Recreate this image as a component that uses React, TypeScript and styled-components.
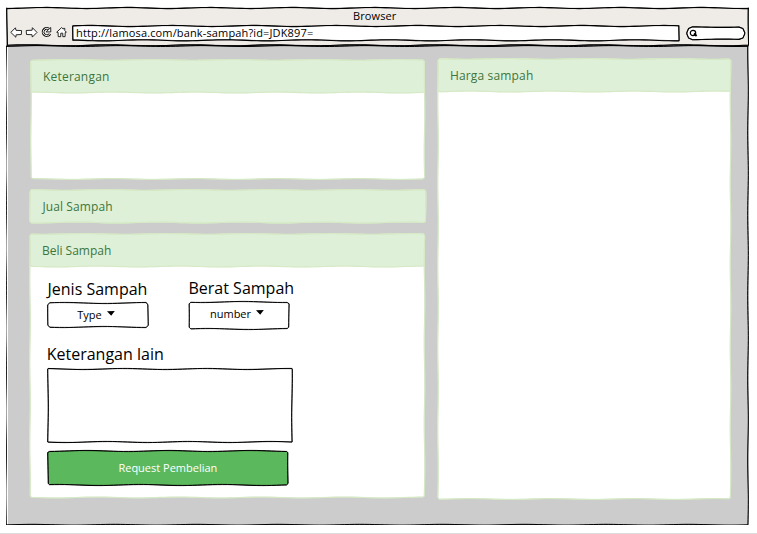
import React from "react";
import styled, { createGlobalStyle } from "styled-components";

const GlobalStyle = createGlobalStyle`
  * { box-sizing: border-box; }
  html, body { margin: 0; padding: 0; background: #fff; }
  body { font-family: "Open Sans", "Noto Sans", sans-serif; color: #000; overflow: hidden; }
`;

/* Builds a slightly wavy outline of a rectangle, as if drawn by hand. */
function wavyRect(w: number, h: number, r: number, amp: number, wave: number, seed: number) {
  const off = (d: number, k: number) =>
    amp * Math.sin((d / wave) * Math.PI * 2 + seed * 1.7 + k * 2.1);
  const pts: string[] = [];
  const side = (len: number, k: number, place: (d: number, o: number) => [number, number]) => {
    const span = len - 2 * r;
    const n = Math.max(3, Math.ceil(span / 5));
    for (let i = 0; i <= n; i++) {
      const d = r + (span * i) / n;
      const [x, y] = place(d, off(d, k));
      pts.push(`${x.toFixed(2)} ${y.toFixed(2)}`);
    }
  };
  const corner = (x: number, y: number) => {
    if (r > 4) pts.push(`${x.toFixed(2)} ${y.toFixed(2)}`);
  };
  const c = r * 0.29;
  side(w, 0, (d, o) => [d, o]);
  corner(w - c, c);
  side(h, 1, (d, o) => [w + o * 0.6, d]);
  corner(w - c, h - c);
  side(w, 2, (d, o) => [w - d, h + o]);
  corner(c, h - c);
  side(h, 3, (d, o) => [o * 0.6, h - d]);
  corner(c, c);
  return `M${pts.join("L")}Z`;
}

const Drawing = styled.svg`
  position: absolute;
  left: 0;
  top: 0;
  overflow: visible;
  pointer-events: none;
`;

interface OutlineProps {
  w: number;
  h: number;
  r?: number;
  color?: string;
  fill?: string;
  seed?: number;
  amp?: number;
  wave?: number;
  weight?: number;
}

function Outline({ w, h, r = 0, color = "#000", fill = "none", seed = 0, amp = 0.6, wave = 82, weight = 1.1 }: OutlineProps) {
  return (
    <Drawing width={w} height={h} aria-hidden="true">
      <path d={wavyRect(w, h, r, amp, wave, seed)} fill={fill} stroke={color} strokeWidth={weight} strokeLinejoin="round" />
      <path d={wavyRect(w, h, r, amp * 0.6, wave, seed + 0.2)} fill="none" stroke={color} strokeWidth={weight * 0.6} strokeLinejoin="round" />
    </Drawing>
  );
}

const Page = styled.main`
  width: 757px;
  height: 534px;
  padding: 0 0 0 6px;
  border-bottom: 1px solid #dcdcdc;
`;

const Browser = styled.div`
  position: relative;
  width: 743px;
  height: 525px;
  padding-top: 8px;
  overflow: hidden;
`;

const Chrome = styled.header`
  position: relative;
  width: 741.5px;
  height: 38px;
  margin-left: 0.5px;
`;

const Title = styled.div`
  position: relative;
  height: 18px;
  padding-right: 5px;
  font-size: 11px;
  line-height: 15px;
  letter-spacing: 0.1px;
  text-align: center;
`;

const Toolbar = styled.div`
  position: relative;
  display: flex;
  padding-left: 3px;
`;

const Icons = styled.div`
  display: flex;
  width: 63.5px;
  gap: 2.3px;
  svg { display: block; }
`;

const Address = styled.div`
  position: relative;
  width: 606px;
  height: 15px;
  margin-right: 8px;
  padding-left: 3px;
  font-size: 11px;
  line-height: 14px;
  letter-spacing: 0.14px;
`;

const Search = styled.div`
  position: relative;
  width: 57.5px;
  height: 13px;
  margin-top: 1px;
`;

const Text = styled.span`
  position: relative;
  white-space: nowrap;
`;

const Content = styled.section`
  position: relative;
  display: flex;
  align-items: flex-start;
  width: 742px;
  height: 478.5px;
  padding: 13.5px 0 0 25px;
`;

const Backdrop = styled.div`
  position: absolute;
  inset: 0 1px 0 2px;
  background: #ccc;
`;

const Column = styled.div<{ $width: number }>`
  position: relative;
  display: flex;
  flex-direction: column;
  gap: 11px;
  width: ${(p) => p.$width}px;
`;

const PanelBox = styled.section<{ $w: number; $h: number; $dx: number; $dy: number }>`
  position: relative;
  width: ${(p) => p.$w}px;
  height: ${(p) => p.$h}px;
  margin: ${(p) => `${p.$dy}px 0 0 ${p.$dx}px`};
`;

const PanelHeader = styled.h2<{ $tracking: number }>`
  position: relative;
  height: 33px;
  margin: 0;
  padding-left: 12px;
  font-size: 12px;
  font-weight: 400;
  line-height: 34px;
  letter-spacing: ${(p) => p.$tracking}px;
  color: #3c763d;
`;

const PanelBody = styled.div`
  position: relative;
  padding: 11px 0 0 17.6px;
`;

interface PanelProps {
  title: string;
  w: number;
  h: number;
  dx?: number;
  dy?: number;
  seed: number;
  tracking?: number;
  children?: React.ReactNode;
}

function Panel({ title, w, h, dx = 0, dy = 0, seed, tracking = 0.1, children }: PanelProps) {
  return (
    <PanelBox $w={w} $h={h} $dx={dx} $dy={dy}>
      <Outline w={w} h={h - 0.5} r={1.5} color="#d6e9c6" fill="#fff" seed={seed} amp={0.5} />
      <PanelHeader $tracking={tracking}>
        <Outline w={w} h={32.5} r={1.5} color="#d6e9c6" fill="#dff0d8" seed={seed} amp={0.5} />
        <Text>{title}</Text>
      </PanelHeader>
      {children && <PanelBody>{children}</PanelBody>}
    </PanelBox>
  );
}

const Fields = styled.div`
  display: flex;
  gap: 41px;
  height: 65px;
`;

const Field = styled.div<{ $lift?: number }>`
  width: 100px;
  margin-top: ${(p) => -(p.$lift ?? 0)}px;
`;

const Label = styled.label<{ $tracking?: number }>`
  display: block;
  height: 25px;
  font-size: 16px;
  line-height: 22px;
  letter-spacing: ${(p) => p.$tracking ?? 0}px;
  white-space: nowrap;
`;

const Select = styled.div<{ $h: number }>`
  position: relative;
  display: flex;
  justify-content: center;
  gap: 5px;
  height: ${(p) => p.$h}px;
  padding-right: 3px;
  font-size: 11px;
  line-height: 24px;
`;

const Caret = styled.svg`
  position: relative;
  width: 8px;
  height: 5px;
  margin-top: 8px;
`;

function Dropdown({ text, h, seed }: { text: string; h: number; seed: number }) {
  return (
    <Select $h={h}>
      <Outline w={100} h={h} r={1.8} seed={seed} weight={0.95} />
      <Text>{text}</Text>
      <Caret viewBox="0 0 8 5"><path d="M0 .3L7.8 0 4.2 4.8Z" /></Caret>
    </Select>
  );
}

const NotesLabel = styled(Label)`
  height: 25.5px;
  margin-left: -0.8px;
`;

const NotesBox = styled.div`
  position: relative;
  width: 244px;
  height: 73px;
  margin-bottom: 9.5px;
`;

const Submit = styled.button`
  position: relative;
  display: block;
  width: 240px;
  height: 34px;
  margin-left: 0.4px;
  padding: 0 0 2px;
  border: 0;
  background: none;
  font: 11px "Open Sans", sans-serif;
  color: #fff;
`;

function NavIcons() {
  const line = { fill: "#fff", stroke: "#111", strokeWidth: 0.9, strokeLinejoin: "round" as const };
  return (
    <Icons>
      <svg width="13" height="14" viewBox="0 0 13 14"><path {...line} d="M.8 6.4L5.4 1.8 6 4.3 11.6 4.6 11.3 8.5 6.1 8.8 5.8 11.2Z" /></svg>
      <svg width="13" height="14" viewBox="0 0 13 14"><path {...line} d="M12 6.4L7.4 1.7 7.1 4.2 1.2 4.5 1.5 8.5 7 8.7 7.3 11.1Z" /></svg>
      <svg width="14" height="14" viewBox="0 0 14 14">
        <path d="M8.8 2.9A3.7 3.7 0 1 0 10 7.8" fill="none" stroke="#111" strokeWidth="2.6" />
        <path d="M8.8 2.9A3.7 3.7 0 1 0 10 7.8" fill="none" stroke="#f5f3f0" strokeWidth="1" />
        <path {...line} d="M6.2 5.9L10.8 5.9 10.7 1.5Z" />
      </svg>
      <svg width="12" height="14" viewBox="0 0 12 14">
        <path {...line} d="M.7 6.2L5.6 1.6 7.3 3.1 7.6 2.3 8.8 2.4 8.8 4.6 10.4 6.2 9.2 6.5 9.1 10.6 6.8 10.7 6.8 7.2 4.8 7.2 4.7 10.7 2.2 10.6 2.1 6.4Z" />
      </svg>
    </Icons>
  );
}

const App = () => (
  <>
    <GlobalStyle />
    <Page>
      <Browser>
        <Chrome>
          <Outline w={741.5} h={37.3} fill="#efebe7" seed={1} />
          <Title>Browser</Title>
          <Toolbar>
            <NavIcons />
            <Address>
              <Outline w={606} h={14.3} fill="#fff" seed={2} />
              <Text>http://lamosa.com/bank-sampah?id=JDK897=</Text>
            </Address>
            <Search>
              <Outline w={57.5} h={12.5} r={5.5} fill="#fff" seed={3} amp={0.4} />
              <Drawing width="14" height="13" viewBox="0 0 14 13">
                <circle cx="6" cy="6" r="2.7" fill="#fff" stroke="#000" strokeWidth="1.2" />
                <path d="M7 6.5L9.6 8.9" stroke="#000" strokeWidth="2" />
              </Drawing>
            </Search>
          </Toolbar>
        </Chrome>
        <Content>
          <Backdrop />
          <Outline w={742} h={478.8} seed={5} amp={0.5} weight={1} />
          <Column $width={407}>
            <Panel title="Keterangan" w={393.5} h={119.5} seed={1} tracking={0.2} />
            <Panel title="Jual Sampah" w={395.5} h={33} dx={-0.6} seed={3} />
            <Panel title="Beli Sampah" w={394.5} h={264} dx={-1.1} seed={4} tracking={0}>
              <Fields>
                <Field>
                  <Label>Jenis Sampah</Label>
                  <Dropdown text="Type" h={24} seed={2} />
                </Field>
                <Field $lift={1}>
                  <Label>Berat Sampah</Label>
                  <Dropdown text="number" h={27} seed={4} />
                </Field>
              </Fields>
              <NotesLabel>Keterangan lain</NotesLabel>
              <NotesBox><Outline w={244} h={73} seed={3} weight={1} /></NotesBox>
              <Submit type="button">
                <Outline w={240} h={34} r={1.5} fill="#5cb85c" seed={1} weight={1} />
                <Text>Request Pembelian</Text>
              </Submit>
            </Panel>
          </Column>
          <Column $width={293}>
            <Panel title="Harga sampah" w={292.5} h={440.5} dy={-0.9} seed={7} tracking={0.15} />
          </Column>
        </Content>
      </Browser>
    </Page>
  </>
);

export default App;
